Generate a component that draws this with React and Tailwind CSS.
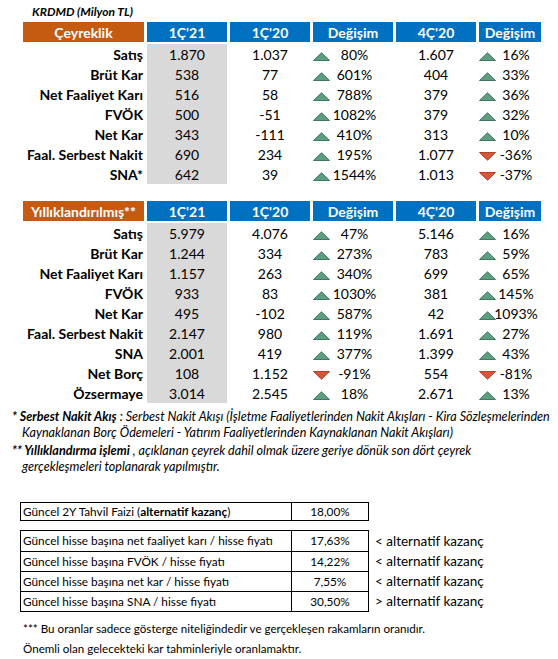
import React from "react";

const Up = () => (
  <svg width="17" height="9" viewBox="0 0 17 9" className="absolute left-0 top-[8px]">
    <polygon points="0.5,8.5 8.5,0.8 16.5,8.5" fill="#5d9d80" stroke="#3f7a60" strokeWidth="1" />
  </svg>
);
const Down = () => (
  <svg width="17" height="9" viewBox="0 0 17 9" className="absolute left-0 top-[8px]">
    <polygon points="0.5,0.5 16.5,0.5 8.5,8.2" fill="#d4573a" stroke="#b2442b" strokeWidth="1" />
  </svg>
);

const q = [
  ["Satış", "1.870", "1.037", "u", "80%", "1.607", "u", "16%"],
  ["Brüt Kar", "538", "77", "u", "601%", "404", "u", "33%"],
  ["Net Faaliyet Karı", "516", "58", "u", "788%", "379", "u", "36%"],
  ["FVÖK", "500", "-51", "u", "1082%", "379", "u", "32%"],
  ["Net Kar", "343", "-111", "u", "410%", "313", "u", "10%"],
  ["Faal. Serbest Nakit", "690", "234", "u", "195%", "1.077", "d", "-36%"],
  ["SNA*", "642", "39", "u", "1544%", "1.013", "d", "-37%"],
];
const y = [
  ["Satış", "5.979", "4.076", "u", "47%", "5.146", "u", "16%"],
  ["Brüt Kar", "1.244", "334", "u", "273%", "783", "u", "59%"],
  ["Net Faaliyet Karı", "1.157", "263", "u", "340%", "699", "u", "65%"],
  ["FVÖK", "933", "83", "u", "1030%", "381", "u", "145%"],
  ["Net Kar", "495", "-102", "u", "587%", "42", "u", "1093%"],
  ["Faal. Serbest Nakit", "2.147", "980", "u", "119%", "1.691", "u", "27%"],
  ["SNA", "2.001", "419", "u", "377%", "1.399", "u", "43%"],
  ["Net Borç", "108", "1.152", "d", "-91%", "554", "d", "-81%"],
  ["Özsermaye", "3.014", "2.545", "u", "18%", "2.671", "u", "13%"],
];

function Header({ title }) {
  const blue = "h-[20px] bg-[#0070c0] text-white font-bold flex items-center justify-center";
  return (
    <div className="flex gap-[3px] text-[14px]">
      <div className="w-[121px] h-[20px] bg-[#c55a11] text-white font-bold flex items-center justify-center">{title}</div>
      <div className={`w-[80px] ${blue}`}>1Ç'21</div>
      <div className={`w-[80px] ${blue}`}>1Ç'20</div>
      <div className={`w-[80px] ${blue}`}>Değişim</div>
      <div className={`w-[80px] ${blue}`}>4Ç'20</div>
      <div className={`w-[62px] ${blue}`}>Değişim</div>
    </div>
  );
}

function Rows({ data }) {
  return (
    <div className="mt-[2px] flex flex-col text-[14px] text-black">
      {data.map((r, i) => (
        <div key={i} className="flex gap-[3px] h-[20px]">
          <div className="w-[121px] flex items-center justify-end pr-[1px] font-bold whitespace-nowrap">{r[0]}</div>
          <div className="w-[80px] bg-[#d9d9d9] flex items-center justify-center">{r[1]}</div>
          <div className="w-[80px] flex items-center justify-center">{r[2]}</div>
          <div className="w-[80px] relative flex items-center justify-center">
            {r[3] === "u" ? <Up /> : <Down />}
            <span className="pl-[3px]">{r[4]}</span>
          </div>
          <div className="w-[80px] flex items-center justify-center">{r[5]}</div>
          <div className="w-[62px] relative flex items-center justify-center pl-[12px]">
            {r[6] === "u" ? <Up /> : <Down />}
            <span className="whitespace-nowrap">{r[7]}</span>
          </div>
        </div>
      ))}
    </div>
  );
}

export default function App() {
  return (
    <div className="w-[558px] h-[659px] bg-white font-['Lato',sans-serif] text-black relative">
      <div className="pl-[32px] pt-[4px] h-[22px] text-[12px] font-bold italic leading-[16px]">KRDMD (Milyon TL)</div>
      <div className="pl-[23px]">
        <Header title="Çeyreklik" />
        <Rows data={q} />
        <div className="h-[17px]" />
        <Header title="Yıllıklandırılmış**" />
        <Rows data={y} />
      </div>
      <div className="mt-[6px] pl-[12px] text-[12.6px] italic leading-[16px] whitespace-nowrap">
        <div>
          <span className="font-bold">* Serbest Nakit Akış</span> : Serbest Nakit Akışı (İşletme Faaliyetlerinden Nakit Akışları - Kira Sözleşmelerinden
        </div>
        <div className="pl-[10px]">Kaynaklanan Borç Ödemeleri - Yatırım Faaliyetlerinden Kaynaklanan Nakit Akışları)</div>
        <div className="mt-[2px]">
          <span className="font-bold">** Yıllıklandırma işlemi</span> , açıklanan çeyrek dahil olmak üzere geriye dönük son dört çeyrek
        </div>
        <div className="pl-[10px]">gerçekleşmeleri toplanarak yapılmıştır.</div>
      </div>
      <div className="mt-[27px] pl-[20px] text-[11.8px]">
        <div className="flex w-[349px] h-[19px] border border-black">
          <div className="w-[271px] border-r border-black flex items-center pl-[2px] whitespace-nowrap">
            Güncel 2Y Tahvil Faizi (<span className="font-bold">alternatif kazanç</span>)
          </div>
          <div className="flex-1 flex items-center justify-center">18,00%</div>
        </div>
        <div className="mt-[9px] flex items-start">
          <div className="w-[349px] border border-black">
            {[
              ["Güncel hisse başına net faaliyet karı / hisse fiyatı", "17,63%"],
              ["Güncel hisse başına FVÖK / hisse fiyatı", "14,22%"],
              ["Güncel hisse başına net kar / hisse fiyatı", "7,55%"],
              ["Güncel hisse başına SNA / hisse fiyatı", "30,50%"],
            ].map((r, i) => (
              <div key={i} className={`flex h-[20px] ${i > 0 ? "border-t border-black" : ""}`}>
                <div className="w-[271px] border-r border-black flex items-center pl-[2px] whitespace-nowrap">{r[0]}</div>
                <div className="flex-1 flex items-center justify-center">{r[1]}</div>
              </div>
            ))}
          </div>
          <div className="pl-[6px] pt-[1px] text-[13.5px] flex flex-col">
            <div className="h-[20px] flex items-center whitespace-nowrap">&lt; alternatif kazanç</div>
            <div className="h-[20px] flex items-center whitespace-nowrap">&lt; alternatif kazanç</div>
            <div className="h-[20px] flex items-center whitespace-nowrap">&lt; alternatif kazanç</div>
            <div className="h-[20px] flex items-center whitespace-nowrap">&gt; alternatif kazanç</div>
          </div>
        </div>
        <div className="mt-[7px] pl-[3px] text-[11.6px] leading-[20px]">
          <div>*** Bu oranlar sadece gösterge niteliğindedir ve gerçekleşen rakamların oranıdır.</div>
          <div>Önemli olan gelecekteki kar tahminleriyle oranlamaktır.</div>
        </div>
      </div>
    </div>
  );
}
